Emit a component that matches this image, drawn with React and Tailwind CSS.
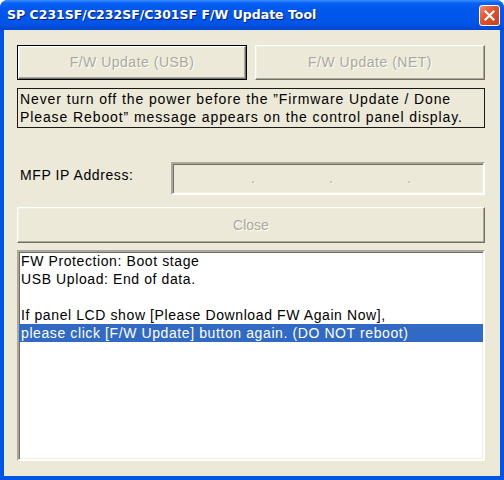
export default function App() {
  const raised =
    "border border-t-white border-l-white border-b-[#716F64] border-r-[#716F64] shadow-[inset_-1px_-1px_0_#ACA899,inset_1px_1px_0_#F1EFE2]";
  const sunken =
    "border-2 border-t-[#ACA899] border-l-[#ACA899] border-b-white border-r-white shadow-[inset_1px_1px_0_#716F64,inset_-1px_-1px_0_#F1EFE2]";
  const disabled = "text-[#ACA899] [text-shadow:1px_1px_0_#fff]";

  return (
    <div className="w-[504px] h-[480px] flex flex-col bg-[#0055E5] rounded-t-[8px] overflow-hidden font-['Liberation_Sans',sans-serif]">
      {/* title bar */}
      <div className="h-[30px] shrink-0 flex items-center justify-between pl-[7px] pr-[4px] bg-[linear-gradient(#3D8EFF_0px,#0A62F5_3px,#0058EE_8px,#0055E5_24px,#0046CF_30px)]">
        <span className="text-white font-bold text-[12.5px] [text-shadow:1px_1px_0_#0A1E80] font-['DejaVu_Sans',sans-serif]">
          SP C231SF/C232SF/C301SF F/W Update Tool
        </span>
        <div className="w-[21px] h-[21px] mt-[1px] rounded-[3px] border border-white bg-[linear-gradient(135deg,#F08A6A,#E0522B_45%,#C8401C)] flex items-center justify-center">
          <svg width="11" height="11" viewBox="0 0 11 11">
            <path d="M1.5 1.5 L9.5 9.5 M9.5 1.5 L1.5 9.5" stroke="#fff" strokeWidth="2.2" strokeLinecap="square" />
          </svg>
        </div>
      </div>

      {/* body */}
      <div className="flex-1 mx-[4px] mb-[4px] bg-[#ECE9D8] pl-[13px] pr-[15px] pt-[15px] flex flex-col text-[14px] text-black">
        <div className="flex gap-[8px] h-[35px] tracking-[0.5px]">
          <div className="flex-1 border border-black">
            <div className={`h-full flex items-center justify-center ${raised} ${disabled}`}>F/W Update (USB)</div>
          </div>
          <div className={`flex-1 flex items-center justify-center ${raised} ${disabled}`}>F/W Update (NET)</div>
        </div>

        <div className="mt-[8px] h-[40px] border border-[#1a1a1a] px-[2px] leading-[18px] pt-[1px] tracking-[0.9px]">
          Never turn off the power before the ”Firmware Update / Done
          <br />
          Please Reboot” message appears on the control panel display.
        </div>

        <div className="mt-[34px] flex items-center h-[33px]">
          <span className="w-[154px] pl-[3px] -mt-[6px] tracking-[0.6px]">MFP IP Address:</span>
          <div className={`flex-1 h-full ${sunken} flex items-center ${disabled}`}>
            <span className="w-[78px]"></span>
            <span className="w-[78px]">.</span>
            <span className="w-[78px]">.</span>
            <span>.</span>
          </div>
        </div>

        <div className={`mt-[12px] h-[36px] flex items-center justify-center ${raised} ${disabled}`}>Close</div>

        <div className={`mt-[7px] h-[211px] bg-white ${sunken} leading-[18px] tracking-[0.6px]`}>
          <div className="px-[2px]">FW Protection: Boot stage</div>
          <div className="px-[2px]">USB Upload: End of data.</div>
          <div className="px-[2px] h-[18px]"></div>
          <div className="px-[2px]">If panel LCD show [Please Download FW Again Now],</div>
          <div className="px-[2px] bg-[#316AC5] text-white">please click [F/W Update] button again. (DO NOT reboot)</div>
        </div>
      </div>
    </div>
  );
}
